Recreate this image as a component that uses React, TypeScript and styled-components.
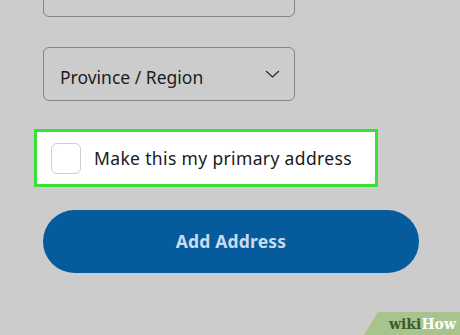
import React from 'react';
import styled, {createGlobalStyle} from 'styled-components';

const Global = createGlobalStyle`
  html, body {
    margin: 0;
    padding: 0;
    background: #cccccc;
  }
  body {
    font-family: "Noto Sans", "Open Sans", sans-serif;
  }
`;

const Page = styled.div`
  position: relative;
  width: 460px;
  height: 335px;
  overflow: hidden;
  background: #cccccc;
`;

const Form = styled.div`
  display: flex;
  flex-direction: column;
  align-items: flex-start;
  padding-left: 43px;
  margin-top: -37px;
`;

const Field = styled.div`
  box-sizing: border-box;
  width: 252px;
  height: 54px;
  border: 1.5px solid #858585;
  border-radius: 6px;
  display: flex;
  align-items: center;
  justify-content: space-between;
  padding: 5px 14px 0 16px;
  font-size: 17.5px;
  color: #1c1c1c;
`;

const Select = styled(Field)`
  margin-top: 30px;
`;

const Chevron = () => (
    <svg width="15" height="8" viewBox="0 0 15 8" style={{marginTop: -6}}>
        <path d="M1 1 L7.5 7 L14 1" fill="none" stroke="#2a2a2a" strokeWidth="1.2"/>
    </svg>
);

const Highlight = styled.label`
  box-sizing: border-box;
  margin: 28px 0 0 -9px;
  width: 344px;
  height: 58px;
  border: 3px solid #38e038;
  background: #ffffff;
  display: flex;
  align-items: center;
  gap: 13px;
  padding-left: 14px;
  font-size: 17.5px;
  letter-spacing: 0.35px;
  color: #1a1a1a;
`;

const Box = styled.span`
  box-sizing: border-box;
  width: 30px;
  height: 31px;
  border: 1.5px solid #cfcfcf;
  border-radius: 6px;
  background: #fff;
`;

const Button = styled.button`
  margin-top: 23px;
  width: 376px;
  height: 63px;
  border: none;
  border-radius: 32px;
  background: #055b9b;
  color: #c9dcef;
  font-family: "Noto Sans", "Open Sans", sans-serif;
  font-size: 17.5px;
  font-weight: 700;
  letter-spacing: 0.2px;
  padding-bottom: 2px;
`;

const Badge = styled.div`
  position: absolute;
  right: 0;
  bottom: 0;
  width: 96px;
  height: 23px;
  background: #a6c48c;
  clip-path: polygon(14px 0, 100% 0, 100% 100%, 0 100%);
  display: flex;
  align-items: center;
  justify-content: flex-end;
  padding-right: 4px;
  box-sizing: border-box;
  font-family: "DejaVu Serif", "Liberation Serif", serif;
  font-weight: 700;
  font-size: 14px;
`;

const Wiki = styled.span`
  color: #3d5a2c;
`;

const How = styled.span`
  color: #ffffff;
`;

export default function App() {
    return (
        <Page>
            <Global/>
            <Form>
                <Field/>
                <Select>
                    <span>Province / Region</span>
                    <Chevron/>
                </Select>
                <Highlight>
                    <Box/>
                    <span>Make this my primary address</span>
                </Highlight>
                <Button>Add Address</Button>
            </Form>
            <Badge>
                <Wiki>wiki</Wiki><How>How</How>
            </Badge>
        </Page>
    );
}
